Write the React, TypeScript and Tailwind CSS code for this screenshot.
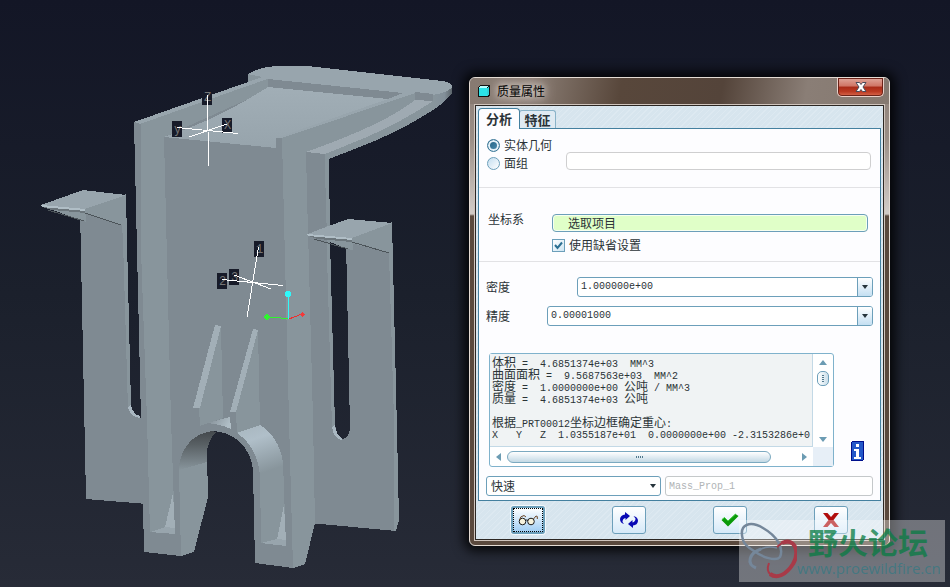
import { useState } from 'react'
import type { ReactNode } from 'react'

const REPORT = [
  '体积 =  4.6851374e+03  MM^3',
  '曲面面积 =  9.5687563e+03  MM^2',
  '密度 =  1.0000000e+00 公吨 / MM^3',
  '质量 =  4.6851374e+03 公吨',
  '',
  '根据_PRT00012坐标边框确定重心:',
  'X   Y   Z  1.0355187e+01  0.0000000e+00 -2.3153286e+0',
]

const AXIS_TAGS = [
  { x: 202, y: 93, h: 12, t: 'Z' },
  { x: 172, y: 121, h: 16, t: 'y' },
  { x: 222, y: 118, h: 15, t: 'X' },
  { x: 254, y: 241, h: 16, t: '1' },
  { x: 217, y: 273, h: 16, t: '2' },
  { x: 229, y: 269, h: 16, t: '3' },
]

function Model() {
  return (
    <svg
      className="absolute left-0 top-0 h-[587px] w-[470px]"
      viewBox="0 0 470 587"
      shapeRendering="crispEdges"
      aria-label="PRT00012"
    >
      <defs>
        <linearGradient id="floor" x1="0" y1="0" x2="0" y2="1">
          <stop offset="0" stopColor="#a1aeb6" />
          <stop offset="1" stopColor="#97a4ac" />
        </linearGradient>
        <linearGradient id="archIn" x1="0" y1="0" x2="0" y2="1">
          <stop offset="0" stopColor="#43484c" />
          <stop offset="0.35" stopColor="#596064" />
          <stop offset="1" stopColor="#88959c" />
        </linearGradient>
        <linearGradient id="archOut" x1="0" y1="0" x2="0.3" y2="1">
          <stop offset="0" stopColor="#a7b5be" />
          <stop offset="0.35" stopColor="#b0bfc9" />
          <stop offset="1" stopColor="#88959c" />
        </linearGradient>
        <linearGradient id="bump" x1="0" y1="0" x2="1" y2="0.3">
          <stop offset="0" stopColor="#7f8a92" />
          <stop offset="1" stopColor="#b0bec6" />
        </linearGradient>
        <linearGradient id="tip" x1="0" y1="0" x2="1" y2="0">
          <stop offset="0" stopColor="#88959c" />
          <stop offset="0.6" stopColor="#83909a" />
          <stop offset="1" stopColor="#5d666c" />
        </linearGradient>
      </defs>

      {/* left wing */}
      <path fill="#7f8a92" d="M80 208 L126 195 L127 240 L131 405 Q133 416 140 418 L147 418 L147 504 L86 499 Z" />
      <path fill="#88959c" d="M84 208 L126 194 L127 240 L131 405 L128 409 L123 240 L122 225 L84 213 Z" />
      <path fill="#a9b7c1" d="M128 407 L131 405 Q133 415 140 416 L140 418 Q130 417 128 407 Z" />
      <path fill="#88959c" d="M50 209 L86 209 L86 222 L80 220 Z" />
      <path fill="#98a5ad" d="M41 205 L83 190 L126 195 L85 209 Z" />
      <path fill="#b0bec6" d="M41 205 L85 209 L85 211 L42 207 Z" />
      <path fill="#6c767c" d="M42 207 L85 211 L85 213 L52 210 Z" />
      <path fill="none" stroke="#4c5459" d="M48 210 L84 221 M85 213 L121 225" />

      {/* right wing */}
      <path fill="#7f8a92" d="M306 152 L325 154 L329 158 L330 240 L335 425 Q337 438 343 439 Q349 438 350 428 L346 240 L346 236 L392 223 L397 430 L399 520 L396 531 L310 523 Z" />
      <path fill="#88959c" d="M325 154 L329 157 L330 240 L335 428 L332 428 L326 220 Z" />
      <path fill="#88959c" d="M351 236 L392 222 L397 430 L399 520 L396 531 L394 531 L394 420 L389 253 L351 243 Z" />
      <path fill="#a9b7c1" d="M332 427 L335 425 Q336 435 343 439 L341 440 Q333 437 332 427 Z" />
      <path fill="#88959c" d="M316 236 L353 238 L353 250 L347 249 Z" />
      <path fill="#98a5ad" d="M307 234 L348 219 L392 223 L352 238 Z" />

      {/* body */}
      <path fill="#7f8a92" d="M134 122 L250 90 L283 137 L293 568 L255 563 L253 470 C251 448 234 431 212 431 C190 434 179 452 179 470 L181 556 L144 552 L143 504 L141 420 Z" />
      <path fill="#88959c" d="M141 122 L248 82 L268 79 L268 90 L164 137 L171 420 L175 534 L150 532 L147 420 L141 250 Z" />
      <path fill="#98a5ad" d="M134 122 L248 82 L248 74 L268 77 L268 79 L250 85 L140 124 Z" />

      {/* top plate */}
      <path fill="#88959c" d="M282 138 L413 92 L452 90 L452 93 Q442 105 430 112 Q395 134 357 148 L329 159 L325 154 L306 152 L313 420 L315 523 L305 564 L293 568 L289 420 Z" />
      <path fill="url(#tip)" d="M433 94 L452 86 L452 93 Q446 101 434 109 Z" />
      <path fill="#98a5ad" d="M248 74 Q262 66 280 66 L307 66 L443 81 Q452 83 452 87 Q449 92 433 95 L415 93 L282 138 L276 138 L403 93 L268 79 Z" />
      <path fill="#88959c" d="M248 74 L262 77 L248 82 Z" />
      <path fill="#7f8a92" d="M268 79 L403 93 L388 99 L268 87 Z M415 92 L433 94 L433 101 L415 100 Z" />
      <path fill="url(#floor)" d="M268 87 L388 99 L276 138 L276 148 L164 137 Q212 121 250 98 Z" />
      <path fill="#7f8a92" d="M276 138 L282 138 L282 150 L276 150 Z" />
      <path fill="#9faab2" d="M415 100 L433 101 Q405 120 367 137 L325 154 L306 152 Q343 139 373 125 Q398 113 415 100 Z" />
      <path fill="#7f8a92" d="M306 152 L325 154 L326 220 L327 226 L308 234 Z" />

      {/* lip of the right wing, in front of the body */}
      <path fill="#b0bec6" d="M307 234 L352 238 L352 240 L308 236 Z" />
      <path fill="#6c767c" d="M308 236 L352 240 L352 242 L318 239 Z" />
      <path fill="none" stroke="#4c5459" d="M314 239 L348 249 M352 242 L389 253" />

      {/* arch and legs */}
      <path fill="#88959c" d="M179 470 L207 453 L208 497 L194 552 L181 556 Z" />
      <path fill="url(#archIn)" d="M179 470 C179 452 190 434 212 431 L216 432 Q207 441 207 454 L207 462 L179 470 Z" />
      <path fill="#88959c" d="M260 472 L283 462 L286 546 L261 543 Z" />
      <path fill="url(#archOut)" d="M237 433 L260 425 Q279 437 283 462 L283 469 L260 477 Q258 447 237 433 Z" />
      <path fill="#a2afb7" d="M173 493 L165 527 L175 528 Z M284 505 L277 539 L286 540 Z" />
      <path fill="#98a5ad" d="M150 532 L165 527 L175 528 L175 534 Z M261 543 L277 539 L286 540 L286 546 Z" />

      {/* ribs */}
      <path fill="#88959c" d="M221 326 L223 418 L200 426 L199 408 Z M258 330 L260 425 L237 433 L236 412 Z" />
      <path fill="url(#bump)" d="M207 423 L230 417 L231 429 Q220 424 207 423 Z" />
      <path fill="#a2afb7" d="M215 325 L221 326 L200 408 L193 408 Z M253 329 L258 330 L236 412 L230 412 Z" />

      {/* coordinate systems */}
      {AXIS_TAGS.map((a) => (
        <g key={a.t}>
          <rect x={a.x} y={a.y} width="10" height={a.h} fill="#171b29" />
          <text x={a.x + 2} y={a.y + a.h - 4} fill="#757575" className="font-['Liberation_Mono'] text-[12px]">
            {a.t}
          </text>
        </g>
      ))}
      <path fill="none" stroke="#fff" d="M207.5 95 L208.5 166 M177 127.5 L238 133.5 M227 124 L189 137" />
      <path fill="none" stroke="#fff" d="M258.5 247 L247 317 M222 279.5 L283 285.5 M234 275 L271 289" />
      <path fill="none" stroke="#2ff52f" d="M267 317 L288 318.5" />
      <path fill="none" stroke="#f32b2b" d="M289 319 L302 314" />
      <path fill="none" stroke="#2ff8fa" d="M288.5 294 V319" />
      <circle cx="267" cy="317" r="2.6" fill="#2ff52f" />
      <circle cx="302.500" cy="314.500" r="2.200" fill="#f33a3a" />
      <circle cx="288" cy="294" r="3.200" fill="#2ff8fa" />
    </svg>
  )
}

function GlassesIcon() {
  return (
    <svg className="h-4 w-5" viewBox="0 0 20 16" fill="none" stroke="#1c1c1c">
      <circle cx="4.500" cy="9.500" r="3.300" fill="#f7f3dd" />
      <circle cx="13" cy="9.500" r="3.300" fill="#f7f3dd" />
      <path d="M7.500 8.500 Q8.800 7.400 10 8.500" />
      <path stroke="#6b4423" d="M1.500 8 Q2 4 6 3.500 L8 5 M15.500 7 L18 4 L19.300 4.500 L19.300 7" />
    </svg>
  )
}

function RepeatIcon() {
  return (
    <svg className="h-4 w-5" viewBox="0 0 20 16" fill="#0808b4">
      <path d="M6 0 L11 4 L6.500 8 L6.500 6 Q3.500 6.500 3.500 10 L5 12 Q1 11 1 7 Q1.500 3 6 2.500 Z" />
      <path d="M14 16 L9 12 L13.500 8 L13.500 10.500 Q16.500 9.500 16.500 6.500 L14.500 4 Q19 5 19 9 Q18.500 13 14 13.500 Z" />
    </svg>
  )
}

function CheckIcon() {
  return (
    <svg className="h-4 w-5" viewBox="0 0 20 16">
      <path fill="#0a9a0a" d="M1.500 8 L4.500 5.500 L8 9 L15.500 2 L18.500 4 L8 14.500 Z" />
      <path fill="none" stroke="#3ccc3c" d="M2 7.500 L4.500 5.500 L8 9 L15.500 2" />
    </svg>
  )
}

function CancelIcon() {
  return (
    <svg className="h-4 w-5" viewBox="0 0 20 16">
      <path fill="#b00d0d" d="M2 1 H6.500 L10 5 L13.500 1 H18 L12.500 8 L18 15 H13.500 L10 11 L6.500 15 H2 L7.500 8 Z" />
    </svg>
  )
}

function Triangle({ d, className }: { d: string; className?: string }) {
  return (
    <svg className={`h-2 w-2 ${className ?? 'fill-[#6c9cb3]'}`} viewBox="0 0 8 8">
      <path d={d} />
    </svg>
  )
}

function Combo({ label, value, labelClass }: { label: string; value: string; labelClass: string }) {
  return (
    <label className="flex h-5 items-center">
      <span className={labelClass}>{label}</span>
      <span className="relative flex h-5 flex-1">
        <select className="h-5 w-full appearance-none rounded-[3px] border border-[#6c9fba] bg-white pl-[3px] font-['Liberation_Mono'] text-[10px] text-[#2b3337]">
          <option>{value}</option>
        </select>
        <span className="pointer-events-none absolute inset-y-px right-px flex w-[15px] items-center justify-center rounded-r-[2px] border-l border-[#6c9fba] bg-linear-to-b from-white to-[#c4dff2]">
          <Triangle d="M1 2 H7 L4 6 Z" className="fill-[#26343c]" />
        </span>
      </span>
    </label>
  )
}

function ReportLine({ text }: { text: string }) {
  return (
    <div className="h-3">
      {text.split(/([\u4e00-\u9fff]+)/).map((part, i) =>
        i % 2 ? <span key={i} className="text-[12px]">{part}</span> : part
      )}
    </div>
  )
}

function ToolButton({ label, active, children }: { label: string; active?: boolean; children: ReactNode }) {
  return (
    <button
      aria-label={label}
      className={
        active
          ? 'h-7 w-[34px] rounded-[3px] border-2 border-[#6c9fba] bg-linear-to-b from-white to-[#9fcdf2] shadow-[0_0_0_1px_#f4f9fc]'
          : 'h-7 w-[34px] rounded-[3px] border border-[#6c9fba] bg-linear-to-b from-white to-[#d5e9f8]'
      }
    >
      <span className={`flex h-full items-center justify-center ${active ? 'border border-dotted border-black' : ''}`}>
        {children}
      </span>
    </button>
  )
}

function Watermark() {
  return (
    <div className="pointer-events-none absolute bottom-[5px] right-[5px] flex h-[62px] w-[206px] bg-white/35">
      <svg className="h-[62px] w-[58px] shrink-0" viewBox="0 0 58 62" fill="none">
        <path stroke="#75879a" strokeWidth="2.500" d="M4 20 C-1 3 12 1 24 8 C38 16 45 28 41 37 C37 42 23 37 15 31 C8 27 5 24 4 20 Z" />
        <path stroke="#75879a" strokeWidth="3" d="M22 29 C10 33 7 44 17 48" />
        <path stroke="#75879a" strokeWidth="1.500" d="M19 31 C24 27 30 26 38 28" />
        <path stroke="#a83a48" strokeWidth="4" d="M43 23 C56 17 61 32 54 44 C47 55 38 59 31 54" />
        <path stroke="#a83a48" strokeWidth="2" d="M32 55 C28 52 28 48 30 43 M38 27 L44 22" />
      </svg>
      <div className="flex flex-1 flex-col whitespace-nowrap">
        <p className="mt-1 pl-[11px] font-['Noto_Sans_CJK_SC',sans-serif] text-[30px] font-bold leading-[34px] text-[#087c43]/75">野火论坛</p>
        <p className="font-['Open_Sans',sans-serif] text-[15px] leading-5 text-[#3f7882]/90">www.proewildfire.cn</p>
      </div>
    </div>
  )
}

export default function App() {
  const [kind, setKind] = useState('solid')
  const [useDefault, setUseDefault] = useState(true)

  const radioClass =
    "h-[13px] w-[13px] appearance-none rounded-full border border-[#6c9fba] bg-linear-to-br from-[#c3def0] to-white checked:border-[#3b7898] checked:from-[#1f5f80] checked:to-[#4f92b5] checked:shadow-[inset_0_0_0_2px_#e5f2f9]"

  return (
    <main className="relative min-h-screen overflow-hidden bg-linear-to-b from-[#131626] via-[#1b202c] to-[#272b37] font-['Noto_Sans_CJK_SC',sans-serif] text-[12px] leading-[18px] text-[#2b3337]">
      <Model />

      <section className="absolute left-[469px] top-[77px] w-[421px] rounded-[6px] border border-[#e5dcd4] bg-[linear-gradient(180deg,#8d8078_0,#9a8e86_60px,#d0cac5_133px,#d0cac5_136px,#5a493d_138px)] shadow-[0_0_12px_5px_rgba(0,0,0,0.85)]">
        <header className="flex h-[26px] items-start rounded-t-[5px] bg-[linear-gradient(100deg,#877a71_0%,#8a7d74_15%,#58473b_36%,#54443a_60%,#8a7e76_80%,#857970_100%)] pl-2">
          <svg className="mt-[7px] h-3 w-3" viewBox="0 0 12 12" shapeRendering="crispEdges">
            <path fill="#111" d="M2 0 H12 V10 L10 12 H0 V2 Z" />
            <path fill="#b9ffff" d="M2 1 H10 L9 3 H1 Z" />
            <path fill="#2be3e8" d="M1 3 H9 V11 H1 Z" />
            <path fill="#2bd3da" d="M9 3 L11 1 V9 L9 11 Z" />
          </svg>
          <h1 className="ml-[7px] mt-1 text-black [text-shadow:0_0_6px_#ddd5cf,0_0_10px_#ddd5cf,0_0_14px_#ddd5cf]">质量属性</h1>
          <button
            aria-label="关闭"
            className="ml-auto mr-[5px] flex h-[19px] w-[47px] items-center justify-center rounded-b-[5px] border border-t-0 border-[#e9cfc8] bg-[linear-gradient(180deg,#e0a79b_0%,#cf7465_45%,#a82a18_50%,#bb3a22_75%,#d96a4f_100%)] shadow-[inset_0_0_0_1px_#6b2318]"
          >
            <svg className="h-3 w-3" viewBox="0 0 12 12">
              <path fill="#fff" stroke="#4c4b5a" d="M1 1.500 H4.500 L6 3.500 L7.500 1.500 H11 L8 6 L11 10.500 H7.500 L6 8.500 L4.500 10.500 H1 L4 6 Z" />
            </svg>
          </button>
        </header>

        <div className="mx-1 mb-1 border border-[#cfc4bc]">
          <div className="border border-[#2c2723] bg-[repeating-linear-gradient(135deg,#d7e5ee_0,#d7e5ee_3px,#dde9f1_3px,#dde9f1_4px)] px-[2px] pt-[2px]">
            <nav className="flex h-5 items-end text-[13px] font-bold leading-5">
              <button className="z-10 -mb-px h-[21px] w-[42px] rounded-t-[4px] border border-b-0 border-[#44809f] bg-[#fdfdff]">分析</button>
              <button className="-ml-px h-[18px] w-[37px] rounded-t-[3px] border border-b-0 border-[#8ab3c8] bg-[#dfeaf2] leading-[18px]">特征</button>
            </nav>

            <div className="border border-[#44809f] bg-[#fdfdff]">
              <div className="flex items-end border-b border-[#e2e2e5] pb-[15px] pl-2 pr-[9px] pt-[7px]">
                <div className="w-[79px]">
                  <label className="flex items-center gap-1">
                    <input type="radio" name="kind" className={radioClass} checked={kind === 'solid'} onChange={() => setKind('solid')} />
                    实体几何
                  </label>
                  <label className="flex items-center gap-1">
                    <input type="radio" name="kind" className={radioClass} checked={kind === 'quilt'} onChange={() => setKind('quilt')} />
                    面组
                  </label>
                </div>
                <input aria-label="面组" className="mb-[2px] h-[18px] min-w-0 flex-1 rounded-[4px] border border-[#cfcfd0] bg-white px-1" />
              </div>

              <div className="flex border-b border-[#e2e2e5] pb-[7px] pl-[9px] pr-3 pt-[26px]">
                <label htmlFor="csys" className="-mt-1 w-16">坐标系</label>
                <div className="flex-1">
                  <input
                    id="csys"
                    defaultValue="选取项目"
                    className="block h-[18px] w-full rounded-[4px] border border-[#6c9fba] bg-[#e0ffc8] pl-[15px] shadow-[inset_0_0_0_1px_#f6fff0]"
                  />
                  <label className="mt-1 flex items-center gap-1">
                    <span className="relative flex">
                      <input
                        type="checkbox"
                        checked={useDefault}
                        onChange={(e) => setUseDefault(e.target.checked)}
                        className="h-[13px] w-[13px] appearance-none border border-[#6c9fba] bg-linear-to-br from-white to-[#cde5f3]"
                      />
                      {useDefault && (
                        <svg className="pointer-events-none absolute inset-0 h-[13px] w-[13px]" viewBox="0 0 13 13" fill="none">
                          <path stroke="#2c6f92" strokeWidth="2" d="M3 6 L5.500 9 L10 3.500" />
                        </svg>
                      )}
                    </span>
                    使用缺省设置
                  </label>
                </div>
              </div>

              <div className="px-[7px] pb-1 pt-[15px]">
                <Combo label="密度" value="1.000000e+00" labelClass="w-[91px]" />
                <div className="mt-[9px]">
                  <Combo label="精度" value="0.00001000" labelClass="w-[61px]" />
                </div>

                <div className="ml-[3px] mt-[27px] flex">
                  <div className="grid h-[114px] min-w-0 flex-1 grid-cols-[minmax(0,1fr)_20px] grid-rows-[minmax(0,1fr)_19px] rounded-[3px] border border-[#7fb2cc] bg-white">
                    <pre className="overflow-hidden border-b border-r border-[#c3d9e6] bg-[#f0f3f4] pl-[2px] pt-1 font-['Liberation_Mono','Noto_Sans_CJK_SC',monospace] text-[10px] leading-3">
                      {REPORT.map((line, i) => (
                        <ReportLine key={i} text={line} />
                      ))}
                    </pre>
                    <div className="flex flex-col items-center py-1">
                      <button aria-label="上" className="flex"><Triangle d="M0 7 L4 2 L8 7 Z" /></button>
                      <span className="mt-[5px] flex h-[15px] w-3 items-center justify-center rounded-[5px] border border-[#6c9fba] bg-linear-to-r from-white to-[#cbdfea]">
                        <span className="h-[7px] w-[2px] bg-[repeating-linear-gradient(180deg,#51788c_0,#51788c_1px,transparent_1px,transparent_2px)]" />
                      </span>
                      <button aria-label="下" className="mt-auto flex"><Triangle d="M0 2 H8 L4 7 Z" /></button>
                    </div>
                    <div className="flex items-center px-1">
                      <button aria-label="左" className="flex"><Triangle d="M7 0 V8 L2 4 Z" /></button>
                      <span className="ml-[5px] mr-[30px] flex h-3 flex-1 items-center justify-center rounded-full border border-[#7ba9c0] bg-linear-to-b from-white to-[#c3d9e5]">
                        <span className="h-[2px] w-[7px] bg-[repeating-linear-gradient(90deg,#51788c_0,#51788c_1px,transparent_1px,transparent_2px)]" />
                      </span>
                      <button aria-label="右" className="flex"><Triangle d="M1 0 L6 4 L1 8 Z" /></button>
                    </div>
                    <div className="bg-[#e7eff7]" />
                  </div>
                  <button aria-label="信息" className="mb-[6px] ml-[17px] mr-[9px] self-end">
                    <svg className="block h-5 w-[13px]" viewBox="0 0 13 20" shapeRendering="crispEdges">
                      <rect width="13" height="20" rx="2" fill="#00108c" />
                      <rect x="1" y="1" width="11" height="18" fill="#2458c8" />
                      <path fill="#fff" d="M5 3 H8 V6 H5 Z M3 8 H8 V16 H10 V18 H3 V16 H5 V10 H3 Z" />
                    </svg>
                  </button>
                </div>

                <div className="mt-[9px] flex gap-1">
                  <span className="relative flex w-[175px]">
                    <select aria-label="类型" className="h-5 w-full appearance-none rounded-[3px] border border-[#6c9fba] bg-white pl-1">
                      <option>快速</option>
                    </select>
                    <span className="pointer-events-none absolute inset-y-0 right-1 flex items-center">
                      <Triangle d="M1 2 H7 L4 6 Z" className="fill-[#26343c]" />
                    </span>
                  </span>
                  <input
                    aria-label="名称"
                    disabled
                    value="Mass_Prop_1"
                    className="h-5 min-w-0 flex-1 rounded-[3px] border border-[#c4c8ca] bg-white pl-[3px] font-['Liberation_Mono'] text-[10px] text-[#b0b4b6]"
                  />
                </div>
              </div>
            </div>

            <footer className="grid grid-cols-4 justify-items-center py-[5px]">
              <ToolButton label="预览" active><GlassesIcon /></ToolButton>
              <ToolButton label="重复"><RepeatIcon /></ToolButton>
              <ToolButton label="确定"><CheckIcon /></ToolButton>
              <ToolButton label="取消"><CancelIcon /></ToolButton>
            </footer>
          </div>
        </div>
      </section>

      <Watermark />
    </main>
  )
}
